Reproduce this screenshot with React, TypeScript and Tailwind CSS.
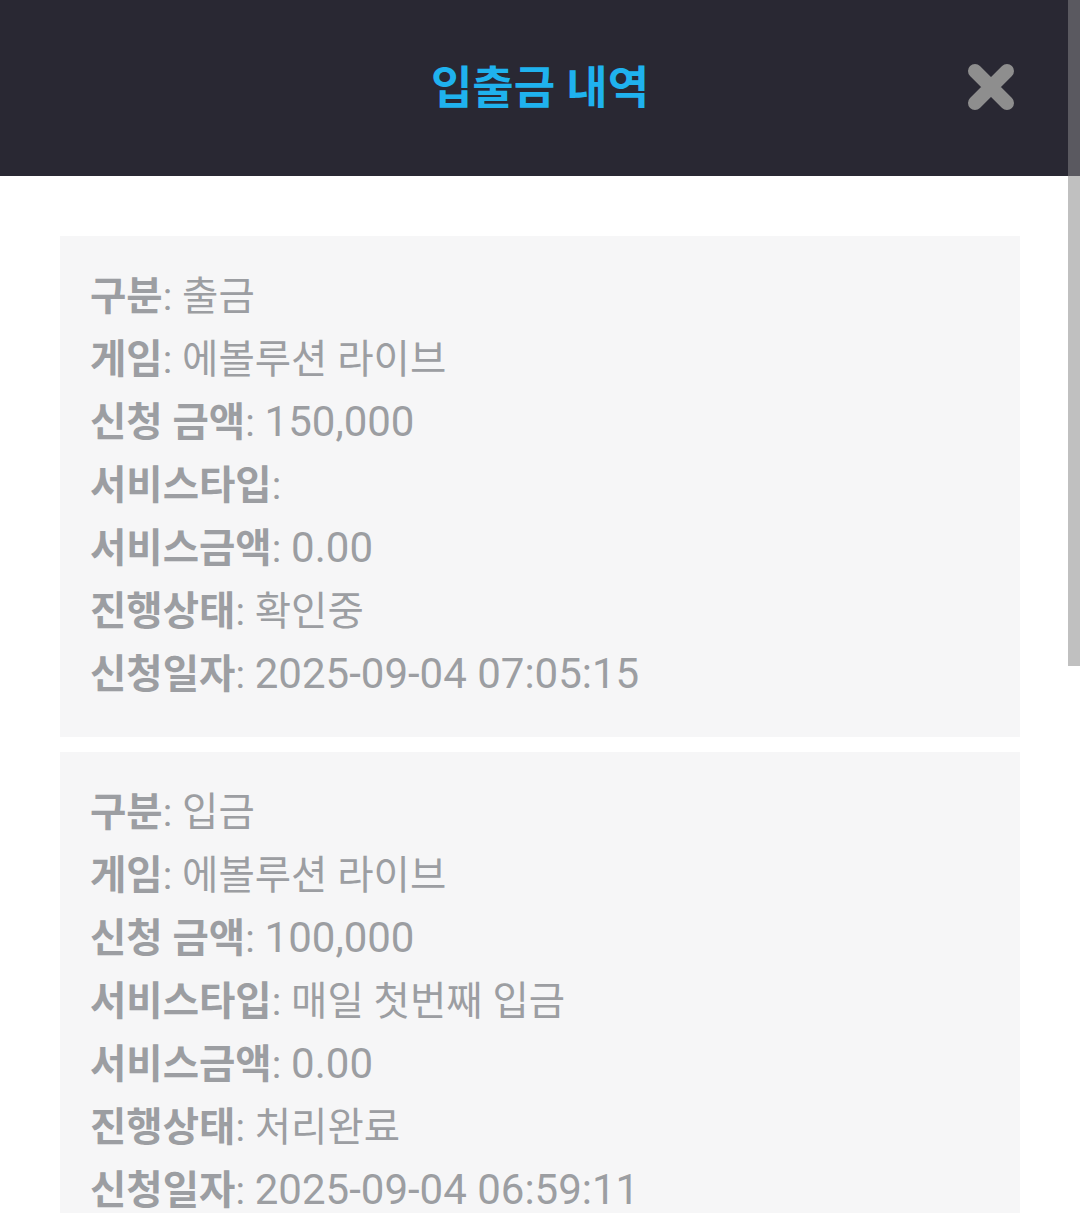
import React from "react";

type Row = { label: string; value: string; num?: boolean };

const records: Row[][] = [
  [
    { label: "구분", value: "출금" },
    { label: "게임", value: "에볼루션 라이브" },
    { label: "신청 금액", value: "150,000", num: true },
    { label: "서비스타입", value: "" },
    { label: "서비스금액", value: "0.00", num: true },
    { label: "진행상태", value: "확인중" },
    { label: "신청일자", value: "2025-09-04 07:05:15", num: true },
  ],
  [
    { label: "구분", value: "입금" },
    { label: "게임", value: "에볼루션 라이브" },
    { label: "신청 금액", value: "100,000", num: true },
    { label: "서비스타입", value: "매일 첫번째 입금" },
    { label: "서비스금액", value: "0.00", num: true },
    { label: "진행상태", value: "처리완료" },
    { label: "신청일자", value: "2025-09-04 06:59:11", num: true },
  ],
];

function CloseIcon() {
  return (
    <svg width="52" height="52" viewBox="0 0 52 52" fill="none">
      <path
        d="M10 10 L42 42 M42 10 L10 42"
        stroke="#8e8e8e"
        strokeWidth="14"
        strokeLinecap="round"
      />
    </svg>
  );
}

export default function App() {
  return (
    <div
      className="relative h-[1213px] w-[1080px] overflow-hidden bg-white"
      style={{ fontFamily: 'Roboto, "Noto Sans CJK KR", sans-serif' }}
    >
      <header className="relative flex h-[176px] items-center justify-center bg-[#292833]">
        <h1 className="text-[45px] font-bold leading-none text-[#1fb2ee]">입출금 내역</h1>
        <button className="absolute left-[965px] top-[61px]">
          <CloseIcon />
        </button>
      </header>

      <div className="flex flex-col gap-[15px] px-[60px] pt-[60px]">
        {records.map((rows, i) => (
          <div key={i} className="bg-[#f6f6f7] pb-[31px] pl-[30px] pt-[29px]">
            {rows.map((r) => (
              <p key={r.label} className="text-[39.5px] leading-[63px] text-[#9c9ea2]">
                <span className="font-bold">{r.label}</span>:{" "}
                <span className={r.num ? "text-[42px] leading-none" : ""}>{r.value}</span>
              </p>
            ))}
          </div>
        ))}
      </div>

      {/* scrollbar overlay */}
      <div className="absolute right-0 top-0 h-[176px] w-[12px] bg-[#5a5960]" />
      <div className="absolute right-0 top-[176px] h-[490px] w-[12px] bg-[#c0c0c0]" />
    </div>
  );
}
